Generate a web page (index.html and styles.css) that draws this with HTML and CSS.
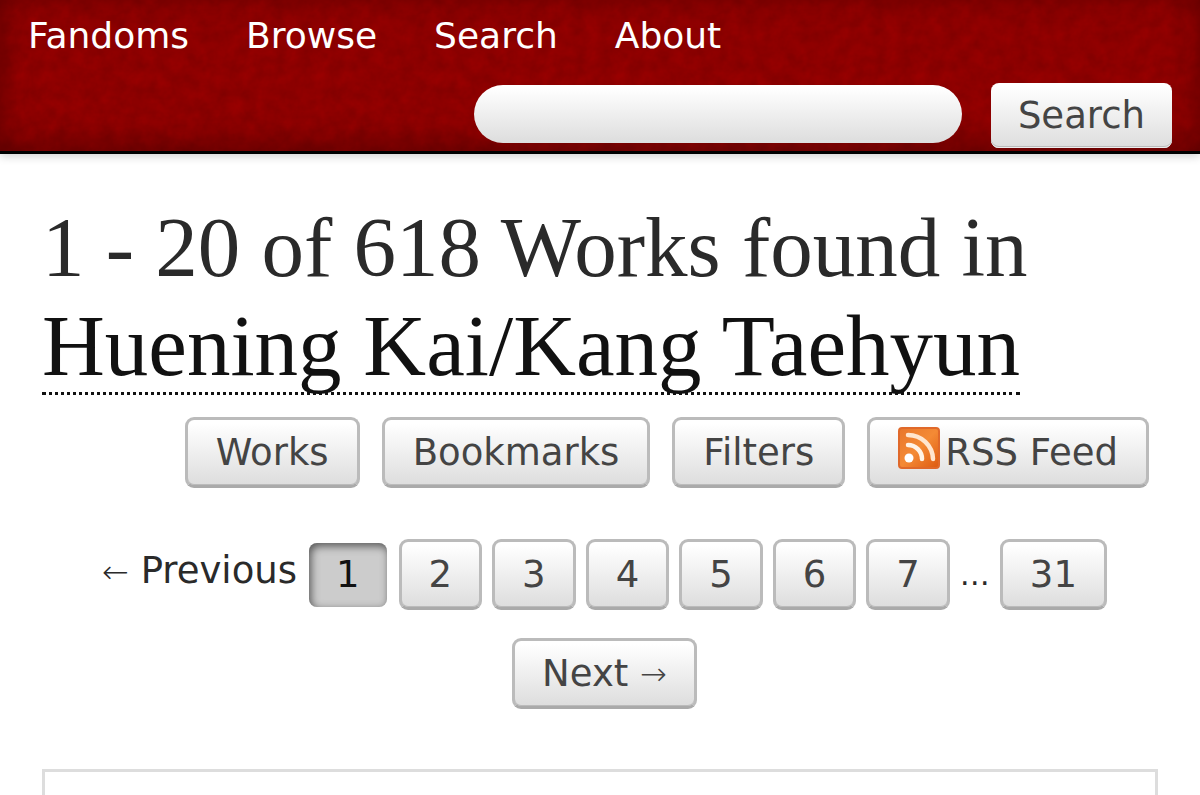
FILE: index.html
```html
<!DOCTYPE html>
<html lang="en">
<head>
    <meta charset="UTF-8">
    <meta name="viewport" content="width=device-width, initial-scale=1.0">
    <title>Huening Kai/Kang Taehyun - Works</title>
    <link rel="stylesheet" href="styles.css">
</head>
<body>
    <header class="header">
        <nav>
            <ul class="menu">
                <li><a href="#">Fandoms</a></li>
                <li><a href="#">Browse</a></li>
                <li><a href="#">Search</a></li>
                <li><a href="#">About</a></li>
            </ul>
        </nav>
        <form class="search" role="search">
            <input class="search-text" type="text" name="query" aria-label="Search works">
            <button class="search-button" type="submit">Search</button>
        </form>
    </header>

    <main class="main">
        <h2 class="heading">1 - 20 of 618 Works found in <a href="#">Huening Kai/Kang Taehyun</a></h2>

        <ul class="actions">
            <li><a class="button" href="#">Works</a></li>
            <li><a class="button" href="#">Bookmarks</a></li>
            <li><a class="button" href="#">Filters</a></li>
            <li>
                <a class="button" href="#"><svg class="rss" viewBox="0 0 42 42" aria-hidden="true">
                        <defs>
                            <linearGradient id="rssFill" x1="0" y1="0" x2="1" y2="1">
                                <stop offset="0" stop-color="#e8762c"/>
                                <stop offset="0.5" stop-color="#f48a35"/>
                                <stop offset="1" stop-color="#dd5a10"/>
                            </linearGradient>
                        </defs>
                        <rect x="1" y="1" width="40" height="40" rx="3" fill="url(#rssFill)" stroke="#e0692a" stroke-width="2"/>
                        <circle cx="11" cy="31" r="4.5" fill="#fff"/>
                        <path d="M10 18a14 14 0 0 1 14 14" fill="none" stroke="#fff3e6" stroke-width="4.5" stroke-linecap="round"/>
                        <path d="M10 8a25 25 0 0 1 25 24" fill="none" stroke="#ffe6cf" stroke-width="4.5" stroke-linecap="round"/>
                    </svg>RSS Feed</a>
            </li>
        </ul>

        <ol class="pagination">
            <li class="plain"><span class="arrow">←</span> Previous</li>
            <li><span class="current">1</span></li>
            <li><a class="button" href="#">2</a></li>
            <li><a class="button" href="#">3</a></li>
            <li><a class="button" href="#">4</a></li>
            <li><a class="button" href="#">5</a></li>
            <li><a class="button" href="#">6</a></li>
            <li><a class="button" href="#">7</a></li>
            <li class="gap">…</li>
            <li><a class="button" href="#">31</a></li>
            <li><a class="button" href="#">Next <span class="arrow">→</span></a></li>
        </ol>

        <div class="work"></div>
    </main>
</body>
</html>
```
FILE: styles.css
```css
* {
    box-sizing: border-box;
}
body {
    display: flex;
    flex-direction: column;
    min-height: 100vh;
    margin: 0;
    background: #fff;
    color: #2a2a2a;
    font-family: Verdana, "DejaVu Sans", sans-serif;
    font-size: 37px;
    line-height: 44px;
}
ul, ol {
    list-style: none;
    margin: 0;
    padding: 0;
}
a {
    color: #111;
    text-decoration: none;
}

/* header */
.header {
    padding: 14px 28px 3px;
    border-bottom: 3px solid #000;
    background-color: #900;
    background-image: url("data:image/svg+xml,%3Csvg xmlns='http://www.w3.org/2000/svg' width='300' height='300'%3E%3Cfilter id='n' x='0' y='0' width='100%25' height='100%25'%3E%3CfeTurbulence type='fractalNoise' baseFrequency='.07' numOctaves='4' stitchTiles='stitch'/%3E%3CfeColorMatrix values='0 0 0 0 0 0 0 0 0 0 0 0 0 0 0 .2 0 0 0 -.02'/%3E%3C/filter%3E%3Crect width='300' height='300' filter='url(%23n)'/%3E%3C/svg%3E");
    box-shadow: inset 0 -6px 30px rgba(0, 0, 0, 0.35), 0 2px 9px rgba(0, 0, 0, 0.2);
}
.menu {
    display: flex;
    gap: 57px;
    font-size: 36px;
}
.menu a {
    color: #fff;
}
.search {
    display: flex;
    justify-content: flex-end;
    align-items: center;
    gap: 29px;
    margin-top: 25px;
}
.search-text {
    width: 488px;
    height: 58px;
    margin-bottom: 3px;
    padding: 0 28px;
    border: none;
    border-radius: 29px;
    background: linear-gradient(#fff 5%, #ddd);
    font: inherit;
}
.search-button {
    height: 65px;
    padding: 0 27px;
    border: none;
    border-radius: 8px;
    background: linear-gradient(#fff 5%, #ddd);
    box-shadow: inset 0 -1px 0 #eee, inset 0 -2px 0 #bbb;
    color: #444;
    font: inherit;
}

/* works */
.main {
    display: flex;
    flex-direction: column;
    flex: 1;
    padding: 44px 42px 0;
}
.heading {
    margin: 0;
    font-family: Georgia, "Liberation Serif", serif;
    font-size: 85px;
    font-weight: normal;
    line-height: 99px;
}
.heading a {
    display: inline-block;
    border-bottom: 3px dotted #111;
    font-size: 87px;
    line-height: 93px;
}
.button {
    display: flex;
    align-items: center;
    height: 71px;
    padding: 0 27px;
    border: 3px solid #bbb;
    border-bottom-color: #aaa;
    border-radius: 9px;
    background: linear-gradient(#fff 5%, #ddd);
    box-shadow: inset 0 -1px 0 #bbb;
    color: #444;
    white-space: pre;
}
.actions {
    display: flex;
    justify-content: flex-end;
    gap: 22px;
    margin: 21px 9px 0 0;
}
.actions .button {
    padding: 0 28px;
}
.rss {
    width: 42px;
    height: 42px;
    margin: 0 5px 10px 0;
}
.pagination {
    display: flex;
    flex-wrap: wrap;
    justify-content: center;
    align-items: center;
    gap: 28px 10px;
    margin-top: 51px;
    padding-left: 9px;
}
.plain {
    padding-bottom: 6px;
}
.current {
    display: block;
    margin: 0 2px;
    padding: 10px 27px;
    border-radius: 8px;
    background: #ccc;
    box-shadow: inset 2px 3px 8px #555;
    color: #111;
}
.arrow {
    font-size: 32px;
    font-weight: 200;
}
.gap {
    font-size: 30px;
}
.work {
    flex: 1;
    min-height: 26px;
    margin-top: 60px;
    border: 3px solid #ddd;
    border-bottom: none;
}
```
